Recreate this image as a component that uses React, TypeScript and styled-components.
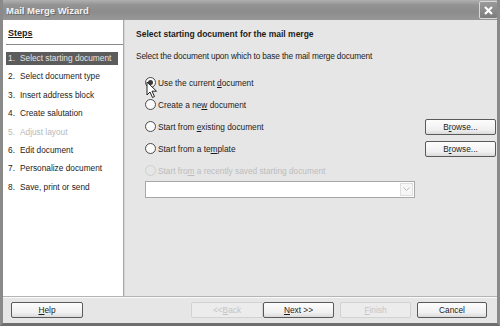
import React from "react";
import styled, { createGlobalStyle } from "styled-components";

const steps = [
  { n: 1, label: "Select starting document", active: true },
  { n: 2, label: "Select document type" },
  { n: 3, label: "Insert address block" },
  { n: 4, label: "Create salutation" },
  { n: 5, label: "Adjust layout", disabled: true },
  { n: 6, label: "Edit document" },
  { n: 7, label: "Personalize document" },
  { n: 8, label: "Save, print or send" },
];

const options = [
  { pre: "Use the current ", key: "d", post: "ocument", checked: true },
  { pre: "Create a ne", key: "w", post: " document" },
  { pre: "Start from ", key: "e", post: "xisting document", browse: true },
  { pre: "Start from a te", key: "m", post: "plate", browse: true },
];

const App = () => {
  return (
    <>
      <GlobalStyle />
      <Window>
        <TitleBar>
          <Title>Mail Merge Wizard</Title>
          <CloseBox>
            <svg width="11" height="11" viewBox="0 0 11 11">
              <path d="M2 2 L9 9 M9 2 L2 9" stroke="#fff" strokeWidth="2.2" />
            </svg>
          </CloseBox>
        </TitleBar>

        <Body>
          <StepsPane>
            <StepsHead>
              <u>Steps</u>
            </StepsHead>
            <StepList>
              {steps.map((s) => (
                <Step key={s.n} active={!!s.active} disabled={!!s.disabled}>
                  <StepNum>{s.n}.</StepNum>
                  {s.label}
                </Step>
              ))}
            </StepList>
          </StepsPane>

          <Main>
            <Heading>Select starting document for the mail merge</Heading>
            <Intro>Select the document upon which to base the mail merge document</Intro>
            <Options>
              {options.map((o) => (
                <OptionRow key={o.pre}>
                  <RadioLabel>
                    <Radio checked={!!o.checked} />
                    <span>
                      {o.pre}
                      <u>{o.key}</u>
                      {o.post}
                    </span>
                  </RadioLabel>
                  {o.browse && (
                    <Button wide={71}>
                      B<u>r</u>owse...
                    </Button>
                  )}
                </OptionRow>
              ))}
              <OptionRow>
                <RadioLabel disabled>
                  <Radio disabled />
                  <span>
                    Start fro<u>m</u> a recently saved starting document
                  </span>
                </RadioLabel>
              </OptionRow>
              <Combo>
                <ComboArrow>
                  <svg width="7" height="5" viewBox="0 0 7 5">
                    <path d="M0.5 0.5 L3.5 3.5 L6.5 0.5" stroke="#bbb" fill="none" />
                  </svg>
                </ComboArrow>
              </Combo>
            </Options>
            <Cursor>
              <svg width="12" height="18" viewBox="0 0 12 18">
                <path
                  d="M1 1 L1 14 L4 11 L6.5 16.5 L8.5 15.5 L6 10.2 L10.5 10.2 Z"
                  fill="#fff"
                  stroke="#222"
                  strokeWidth="1"
                  strokeLinejoin="round"
                />
              </svg>
            </Cursor>
          </Main>
        </Body>

        <ButtonBar>
          <Button wide={72}>
            <u>H</u>elp
          </Button>
          <Spacer />
          <Button wide={72} disabled>
            &lt;&lt; <u>B</u>ack
          </Button>
          <Button wide={71}>
            <u>N</u>ext &gt;&gt;
          </Button>
          <Gap />
          <Button wide={71} disabled>
            <u>F</u>inish
          </Button>
          <Gap />
          <Button wide={70}>Cancel</Button>
        </ButtonBar>
      </Window>
    </>
  );
};

export default App;

const GlobalStyle = createGlobalStyle`
  body {
    margin: 0;
    background: #e6e6e6;
    font-family: "Liberation Sans", Arial, sans-serif;
  }
`;

const Window = styled.div`
  width: 500px;
  height: 326px;
  box-sizing: border-box;
  display: flex;
  flex-direction: column;
  background: #e6e6e6;
  border-left: 3px solid #8a8a8a;
  border-right: 3px solid #8a8a8a;
  border-bottom: 3px solid #6e6e6e;
  font-size: 8.3px;
  color: #1c1c1c;
  overflow: hidden;
`;

const TitleBar = styled.div`
  height: 20px;
  display: flex;
  align-items: center;
  justify-content: space-between;
  padding: 0 2px 0 4px;
  margin: 0 -3px;
  background: linear-gradient(#b0b0b0 0%, #939393 25%, #8c8c8c 60%, #989898 100%);
`;

const Title = styled.div`
  font-weight: bold;
  font-size: 9.5px;
  color: #f2f2f2;
  text-shadow: 1px 1px 0 #6a6a6a;
  padding-left: 2px;
`;

const CloseBox = styled.div`
  width: 17px;
  height: 16px;
  display: flex;
  align-items: center;
  justify-content: center;
  border: 1px solid #d8d8d8;
  border-radius: 2px;
  background: linear-gradient(#9a9a9a, #7c7c7c);
`;

const Body = styled.div`
  flex: 1;
  display: flex;
  min-height: 0;
  border-bottom: 1px solid #b4b4b4;
  box-shadow: 0 1px 0 #fafafa;
`;

const StepsPane = styled.div`
  width: 121px;
  background: #fff;
  border-right: 1px solid #a8a8a8;
  box-shadow: 1px 0 0 #d4d4d4;
  padding: 8px 0 0 3px;
  box-sizing: border-box;
`;

const StepsHead = styled.div`
  font-weight: bold;
  font-size: 9px;
  height: 12px;
  padding: 0 0 4px 2px;
  border-bottom: 1px solid #8a8a8a;
`;

const StepList = styled.div`
  display: flex;
  flex-direction: column;
  gap: 5.4px;
  margin-top: 7px;
`;

const Step = styled.div<{ active: boolean; disabled: boolean }>`
  box-sizing: border-box;
  height: 13px;
  line-height: 13px;
  width: 112px;
  padding-left: 2px;
  white-space: nowrap;
  background: ${(p) => (p.active ? "#5c5c5c" : "transparent")};
  color: ${(p) => (p.active ? "#e4e4e4" : p.disabled ? "#b8b8b8" : "#1c1c1c")};
`;

const StepNum = styled.span`
  display: inline-block;
  width: 12px;
`;

const Main = styled.div`
  position: relative;
  flex: 1;
  padding: 9px 1px 0 12px;
`;

const Heading = styled.div`
  font-weight: bold;
  font-size: 8.5px;
  height: 12px;
`;

const Intro = styled.div`
  margin-top: 10px;
  height: 11px;
  letter-spacing: -0.15px;
`;

const Options = styled.div`
  display: flex;
  flex-direction: column;
  gap: 5px;
  margin-top: 12px;
  padding-left: 9px;
`;

const OptionRow = styled.div`
  display: flex;
  align-items: center;
  justify-content: space-between;
  min-height: 17px;
`;

const RadioLabel = styled.label<{ disabled?: boolean }>`
  display: flex;
  align-items: center;
  gap: 2px;
  color: ${(p) => (p.disabled ? "#bdbdbd" : "#1c1c1c")};
`;

const Radio = styled.span<{ checked?: boolean; disabled?: boolean }>`
  width: 9px;
  height: 9px;
  border-radius: 50%;
  border: 1px solid ${(p) => (p.disabled ? "#cfcfcf" : "#4a4a4a")};
  background: ${(p) => (p.disabled ? "#e6e6e6" : "#fafafa")};
  display: flex;
  align-items: center;
  justify-content: center;
  &::after {
    content: "";
    width: 5px;
    height: 5px;
    border-radius: 50%;
    background: ${(p) => (p.checked ? "#3a3a3a" : "transparent")};
  }
`;

const Combo = styled.div`
  margin-top: -3px;
  width: 270px;
  height: 17px;
  box-sizing: border-box;
  background: #fff;
  border: 1px solid #a8a8a8;
  display: flex;
  justify-content: flex-end;
  align-items: center;
  padding: 1px;
`;

const ComboArrow = styled.div`
  width: 13px;
  height: 13px;
  border: 1px solid #dedede;
  box-sizing: border-box;
  display: flex;
  align-items: center;
  justify-content: center;
  background: #f6f6f6;
`;

const Cursor = styled.div`
  position: absolute;
  left: 22px;
  top: 61px;
  line-height: 0;
`;

const ButtonBar = styled.div`
  height: 26px;
  display: flex;
  align-items: center;
  padding: 0 10px 0 8px;
`;

const Spacer = styled.div`
  flex: 1;
`;

const Gap = styled.div`
  width: 6px;
`;

const Button = styled.div<{ wide: number; disabled?: boolean }>`
  width: ${(p) => p.wide}px;
  height: 16px;
  box-sizing: border-box;
  display: flex;
  align-items: center;
  justify-content: center;
  border-radius: 2px;
  border: 1px solid ${(p) => (p.disabled ? "#d2d2d2" : "#5a5a5a")};
  background: ${(p) =>
    p.disabled ? "#ececec" : "linear-gradient(#fdfdfd, #f0f0f0 70%, #dadada)"};
  color: ${(p) => (p.disabled ? "#c4c4c4" : "#1c1c1c")};
`;
